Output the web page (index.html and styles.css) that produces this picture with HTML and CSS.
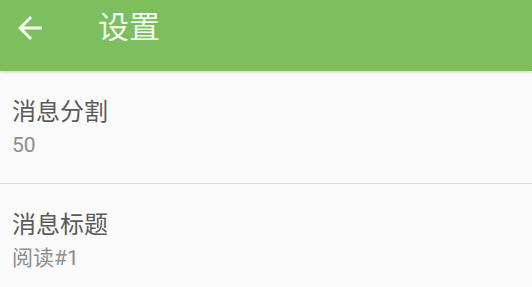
FILE: index.html
```html
<!DOCTYPE html>
<html lang="zh-CN">
<head>
<meta charset="utf-8">
<title>设置</title>
<link rel="stylesheet" href="styles.css">
</head>
<body>
<header class="toolbar">
  <div class="toolbar-row">
    <button class="back" aria-label="返回">
      <svg viewBox="0 0 24 24" width="36" height="36"><path d="M20 11H7.83l5.59-5.59L12 4l-8 8 8 8 1.41-1.41L7.83 13H20v-2z" fill="currentColor"/></svg>
    </button>
    <h1 class="title">设置</h1>
  </div>
</header>
<main class="list">
  <div class="pref">
    <div class="pref-title">消息分割</div>
    <div class="pref-summary">50</div>
  </div>
  <div class="divider"></div>
  <div class="pref">
    <div class="pref-title">消息标题</div>
    <div class="pref-summary">阅读#1</div>
  </div>
</main>
</body>
</html>
```
FILE: styles.css
```css
html, body {
  margin: 0;
  padding: 0;
  background: #fafafa;
  height: 100%;
  overflow: hidden;
}
body {
  font-family: Roboto, "Noto Sans CJK SC", sans-serif;
}
.toolbar {
  height: 71px;
  background: #7dbe5f;
  box-shadow: 0 1px 3px rgba(0,0,0,0.18);
  position: relative;
  z-index: 1;
}
.toolbar-row {
  height: 56px;
  display: flex;
  align-items: center;
  padding-left: 12px;
}
.back {
  width: 36px;
  height: 36px;
  padding: 0;
  border: 0;
  background: none;
  color: rgba(255,255,255,0.92);
  display: flex;
}
.title {
  margin: 0 0 0 50px;
  font-size: 31px;
  font-weight: 400;
  line-height: 56px;
  color: rgba(255,255,255,0.92);
}
.pref {
  padding: 25px 12px 24px 12px;
}
.pref-title {
  font-size: 24px;
  line-height: 32px;
  color: #5a5a5a;
}
.pref-summary {
  margin-top: 3px;
  font-size: 21px;
  line-height: 28px;
  color: #8d8d8d;
}
.divider {
  height: 1px;
  background: #dadada;
}
```
